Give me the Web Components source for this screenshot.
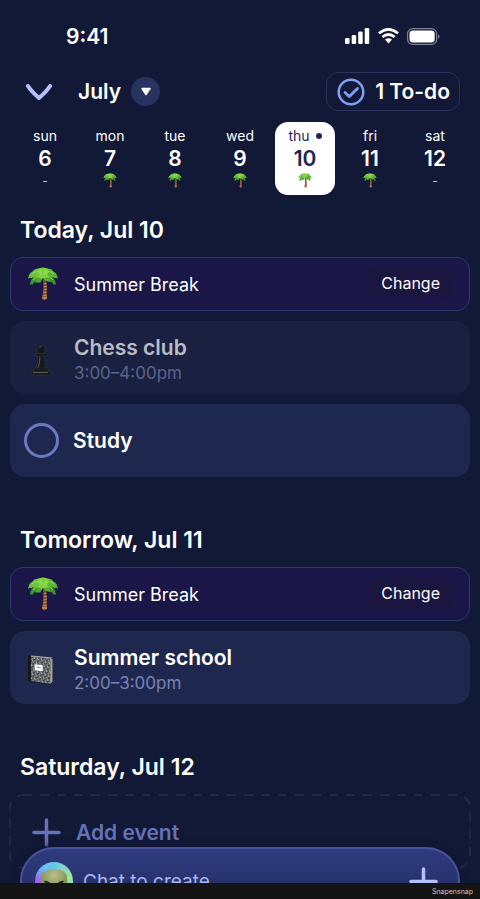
<!DOCTYPE html>
<html lang="en">
<head>
<meta charset="utf-8">
<meta name="viewport" content="width=device-width, initial-scale=1">
<title>Schedule</title>
<style>
  html, body { margin: 0; height: 100%; }
  body { background: #121937; color: #fff; font-family: Inter, "Liberation Sans", sans-serif; }
</style>
</head>
<body>
<planner-app></planner-app>
<script>
const define = (name, html, setup) => {
  const template = document.createElement('template');
  template.innerHTML = `<style>*{box-sizing:border-box}button{font:inherit;color:inherit;background:none;border:0;padding:0;cursor:pointer}svg{display:block}</style>${html}`;
  customElements.define(name, class extends HTMLElement {
    constructor() {
      super();
      this.attachShadow({ mode: 'open' }).append(template.content.cloneNode(true));
    }
    connectedCallback() { if (setup) setup(this, this.shadowRoot); }
  });
};

define('palm-icon', `
<style>:host{display:block;width:30px;height:34px}svg{width:100%;height:100%}</style>
<svg viewBox="0 0 30 34" aria-hidden="true">
  <path d="M14.500 10Q16.500 20 14 32Q16.500 33.500 19 32Q19.500 21 17.500 10Z" fill="#7d4e2d"/>
  <path d="M16 17l2.500-1M15.800 20l3-1M15.500 23l3.300-1M15 26l3.500-1M14.600 29l4-1" stroke="#c98d55" stroke-width="1.100"/>
  <path d="M14 31.500q2.500 2 5 .3l-.2-2.500q-2 1.200-4.400.6z" fill="#b98252"/>
  <path d="M12 7Q3 8 2 18Q3.500 16.500 4.500 18Q5.500 14.500 7.500 15Q8.500 12 10.500 13Q12 11 14 11Z" fill="#3f9a2c"/>
  <path d="M18 7Q27 8 28 18Q26.500 16.500 25.500 18Q24.500 14.500 22.500 15Q21.500 12 19.500 13Q18 11 16 11Z" fill="#3a8f2a"/>
  <path d="M14 4Q8-1 4 5Q1 6 0 12Q2 10 3.500 11.500Q4.500 9.500 6.500 10.500Q8 8.500 10 9.500Q12 8 14.500 8.500Z" fill="#6ac23b"/>
  <path d="M16 4Q22-1 26 5Q29 6 30 12Q28 10 26.500 11.500Q25.500 9.500 23.500 10.500Q22 8.500 20 9.500Q18 8 15.500 8.500Z" fill="#5cb436"/>
  <path d="M13 7Q8 9 7.500 16.500Q9 14.500 10 16Q11 14.500 12 16Q14.500 13 15 8Z" fill="#4fa834"/>
  <path d="M17 7Q22 9 22.500 15.500Q21 14 20 15Q19 13.500 18 14.500Q15.500 12 15 8Z" fill="#58ac36"/>
  <path d="M9 2Q15-1 21 2Q20 4 19.500 9Q18 12 15.500 11Q12.500 13 11 9.500Q11 4 9 2Z" fill="#7dd242"/>
  <path d="M4 7Q8 3 13 6M26 7Q22 3 17 6M5 13Q8 9 12 9.500M25 13Q22 9 18 9.500M12 3.500L14 8M18 3.500L16 8" fill="none" stroke="#a4e55a" stroke-width=".8"/>
</svg>`);

define('pawn-icon', `
<style>:host{display:block}</style>
<svg width="22" height="32" viewBox="0 0 22 32" aria-hidden="true" fill="#151719" stroke="#36393c" stroke-width=".6">
  <path d="M8 11H14Q13.500 19 17 25H5Q8.500 19 8 11Z"/>
  <circle cx="11" cy="5.500" r="4.500"/>
  <rect x="5" y="9.500" width="12" height="2.500" rx="1"/>
  <path d="M4.500 24H17.500L19 27.500H3Z"/>
  <rect x="1" y="27" width="20" height="4" rx="1"/>
  <path d="M8.500 4Q9.500 2.500 11.500 2.500M10 13Q10 19 8 23.500M3 28.500H18" fill="none" stroke="#6a6e70" stroke-width=".8"/>
</svg>`);

define('notebook-icon', `
<style>:host{display:block}</style>
<svg width="28" height="32" viewBox="0 0 28 32" aria-hidden="true">
  <defs><pattern id="m" width="4" height="4" patternUnits="userSpaceOnUse" patternTransform="rotate(20)">
    <rect width="4" height="4" fill="#606466"/><path d="M0 1h1v1H0zM3 0h1v1H3zM2 2.500h1v1H2z" fill="#b9bcbc"/><path d="M1 2h1v1H1zM2 .5h1v1H2zM0 3h1v1H0z" fill="#303436"/>
  </pattern></defs>
  <path d="M1 1.500L26 3.500V28L23 31L1 27Z" fill="#17191b"/>
  <path d="M4 2L24 4V30L4 27Z" fill="url(#m)"/>
  <path d="M23.500 4.500L25.500 5V27.500L23.500 30Z" fill="#a5a5a0"/>
  <path d="M4 1.500L26 3.500L24 4.500L4 2.500Z" fill="#a7a9aa"/>
  <path d="M8.500 11L15 12V16.500L8.500 15.500Z" fill="#fff" stroke="#fff" stroke-width="1.500" stroke-linejoin="round"/>
  <path d="M9.500 13L14 14" stroke="#888" stroke-width="1"/>
</svg>`);

define('status-bar', `
<style>
  :host{display:flex;justify-content:space-between;align-items:center;height:72px;padding:0 39px 0 66px}
  time{font-size:21px;font-weight:600}
  .signals{display:flex;align-items:center;gap:8px}
</style>
<time>9:41</time>
<div class="signals">
  <svg width="25" height="16" viewBox="0 0 25 16" fill="#fff" aria-label="Mobile signal"><rect y="10" width="4.500" height="6" rx="1.300"/><rect x="6.700" y="7" width="4.500" height="9" rx="1.300"/><rect x="13.200" y="3.500" width="4.500" height="12.500" rx="1.300"/><rect x="19.700" width="4.500" height="16" rx="1.300"/></svg>
  <svg width="21" height="16" viewBox="0 0 21 16" fill="none" stroke="#fff" stroke-width="2.700" aria-label="Wi-Fi"><path d="M1 5.300Q10.500-2.800 20 5.300M4.400 9Q10.500 4 16.600 9"/><path d="M7 11.600Q10.500 8.900 14 11.600L10.500 15.600Z" fill="#fff" stroke="none"/></svg>
  <svg width="34" height="17" viewBox="0 0 34 17" aria-label="Battery full"><rect x=".6" y=".6" width="29" height="15.800" rx="5" fill="none" stroke="#7d8296" stroke-width="1.200"/><rect x="2.500" y="2.500" width="25.200" height="12" rx="3.400" fill="#fff"/><path d="M31 6Q34 8.500 31 11Z" fill="#7d8296"/></svg>
</div>`);

define('month-header', `
<style>
  :host{display:flex;align-items:center;padding:0 20px 0 26px}
  .back{margin-right:26px}
  .month{display:flex;align-items:center;gap:10px;font-size:21px;font-weight:600;height:36px}
  .drop{display:grid;place-items:center;width:29px;height:29px;border-radius:50%;background:#283360}
  .todo{display:flex;align-items:center;gap:10px;height:39px;margin-left:auto;padding:0 9px 0 10px;border:1px solid #28325a;border-radius:12px;font-size:21px;font-weight:600}
</style>
<button class="back" aria-label="Collapse calendar"><svg width="26" height="18" viewBox="0 0 26 18" fill="none" stroke="#b4bffb" stroke-width="4" stroke-linecap="round" stroke-linejoin="round"><path d="M2 3Q5 8 13 15Q21 8 24 3"/></svg></button>
<button class="month">July <span class="drop"><svg width="12" height="10" viewBox="0 0 12 10"><path d="M2 1.500H10L6 7.500Z" fill="#fff" stroke="#fff" stroke-width="1.500" stroke-linejoin="round"/></svg></span></button>
<button class="todo"><svg width="28" height="28" viewBox="0 0 28 28" fill="none" stroke="#7f9ff3" stroke-width="2.500" stroke-linecap="round" stroke-linejoin="round"><circle cx="14" cy="14" r="12.300"/><path d="M8 14.500L12.300 18.500L20.500 10.500" stroke-width="2.800"/></svg>1 To-do</button>`);

define('week-day', `
<style>
  :host{display:block;min-width:0}
  button{display:flex;flex-direction:column;align-items:center;width:100%;height:73px;padding-top:4px;border-radius:13px}
  :host([selected]) button{background:#fff;color:#1d2556}
  .name{display:flex;align-items:center;gap:6px;font-size:14px;line-height:20px;height:20px}
  .num{font-size:21px;font-weight:600;line-height:26px}
  .mark{display:grid;place-items:center;width:15px;height:17px;font-size:12px;color:#b9bdcc}
  palm-icon{width:14px;height:15px}
  i{width:6px;height:6px;border-radius:50%;background:#1d2556}
</style>
<button><span class="name"></span><span class="num"></span><span class="mark"></span></button>`, (el, root) => {
  root.querySelector('.name').textContent = el.getAttribute('name');
  root.querySelector('.num').textContent = el.getAttribute('num');
  root.querySelector('.mark').append(el.hasAttribute('break') ? document.createElement('palm-icon') : '-');
  if (el.hasAttribute('selected')) {
    root.querySelector('.name').append(document.createElement('i'));
    root.querySelector('button').setAttribute('aria-current', 'date');
  }
});

define('week-strip', `
<style>:host{display:grid;grid-template-columns:repeat(7,minmax(0,1fr));gap:5px;padding:11px 15px 8px 15px}</style>
<slot></slot>`);

define('day-section', `
<style>
  :host{display:block;margin-bottom:36px}
  h2{margin:0;padding:0 10px;font-size:23px;line-height:54px;font-weight:600}
  .items{display:flex;flex-direction:column;gap:10px}
</style>
<h2></h2><div class="items"><slot></slot></div>`, (el, root) => {
  root.querySelector('h2').textContent = el.getAttribute('heading');
});

define('break-card', `
<style>
  :host{display:flex;align-items:center;height:54px;padding:0 15px 0 17px;border:1px solid #2b3870;border-radius:13px;background:#1a1647;font-size:18px}
  span{flex:1;margin-left:16px}
  button{height:30px;padding:0 14px;border-radius:10px;background:#1a163f;font-size:16px;margin-bottom:3px}
</style>
<palm-icon></palm-icon><span>Summer Break</span><button>Change</button>`);

define('event-card', `
<style>
  :host{display:flex;align-items:center;height:73px;padding-top:4px;border-radius:15px;background:#1e284e}
  :host([past]){background:#192040}
  .icon{display:grid;place-items:center;width:64px;padding-right:2px}
  .title{font-size:21px;font-weight:600;line-height:26px}
  .time{font-size:17px;line-height:24px;color:#7783b8}
  :host([past]) .title{color:#b9bcc5}
  :host([past]) .time{color:#59648d}
</style>
<div class="icon"><slot name="icon"></slot></div>
<div><div class="title"></div><div class="time"></div></div>`, (el, root) => {
  root.querySelector('.title').textContent = el.getAttribute('title-text');
  root.querySelector('.time').textContent = el.getAttribute('time');
});

define('task-card', `
<style>
  :host{display:block;border-radius:15px;background:#1e284e}
  label{display:flex;align-items:center;gap:14px;height:73px;padding-left:14px;font-size:21px;font-weight:600}
  input{appearance:none;width:35px;height:35px;margin:0;border:3px solid #6d7ac3;border-radius:50%}
  input:checked{background:#6d7ac3}
</style>
<label><input type="checkbox"><slot></slot></label>`);

define('add-event', `
<style>
  :host{display:block;position:relative}
  button{display:flex;align-items:center;gap:15px;width:100%;height:76px;padding-left:22px;color:#6571b9;font-size:21px;font-weight:600}
  .outline{position:absolute;inset:0;width:100%;height:100%;pointer-events:none;overflow:visible}
</style>
<svg class="outline" aria-hidden="true"><rect x="0" y="1" width="100%" height="73" rx="13" fill="none" stroke="#20294d" stroke-width="2" stroke-dasharray="9 8"/></svg>
<button><svg width="29" height="29" viewBox="0 0 29 29" stroke="#6571b9" stroke-width="3.500" stroke-linecap="round"><path d="M14.500 2V27M2 14.500H27"/></svg>Add event</button>`);

define('chat-bar', `
<style>
  :host{display:flex;align-items:center;gap:10px;height:68px;padding:0 20px 0 13px;border:2px solid #46539a;border-radius:38px;background:linear-gradient(#303c81,#263069 60%);box-shadow:0 0 8px #0d1331}
  input{flex:1;min-width:0;border:0;outline:0;padding:0;background:none;color:#fff;font:19px Inter,"Liberation Sans",sans-serif}
  input::placeholder{color:#a9b5f2;opacity:1}
  .face{display:grid;place-items:center;width:38px;height:38px;border-radius:50%;background:conic-gradient(#65c8e8,#a5e49a 80deg,#62c9ee 140deg,#5b72e8 210deg,#a55fe8 270deg,#68bdf0 320deg,#65c8e8)}
</style>
<div class="face"><svg width="38" height="38" viewBox="0 0 38 38" aria-hidden="true"><defs><radialGradient id="g" cy=".25"><stop stop-color="#bdc18c"/><stop offset="1" stop-color="#85945c"/></radialGradient></defs><path d="M6 17Q5 8 19 7Q33 8 32 17Q34 31 19 32Q4 31 6 17Z" fill="url(#g)"/><path d="M9 19Q13 18 16 22Q11 24 9 19ZM29 19Q25 18 22 22Q27 24 29 19Z" fill="#252b2b"/></svg></div>
<input type="text" placeholder="Chat to create" aria-label="Chat to create">
<button aria-label="Add"><svg width="29" height="29" viewBox="0 0 29 29" stroke="#b4bffb" stroke-width="3.500" stroke-linecap="round"><path d="M14.500 2V27M2 14.500H27"/></svg></button>`);

define('planner-app', `
<style>
  :host{display:flex;flex-direction:column;height:100vh}
  .screen{position:relative;flex:1;min-height:0;overflow:hidden}
  main{padding:0 10px}
  chat-bar{position:absolute;left:20px;right:20px;bottom:-32px}
  footer{height:16px;padding-right:7px;background:#141414;color:#c9c9c9;font-size:7px;line-height:18px;text-align:right}
</style>
<div class="screen">
  <status-bar></status-bar>
  <month-header></month-header>
  <week-strip>
    <week-day name="sun" num="6"></week-day>
    <week-day name="mon" num="7" break></week-day>
    <week-day name="tue" num="8" break></week-day>
    <week-day name="wed" num="9" break></week-day>
    <week-day name="thu" num="10" break selected></week-day>
    <week-day name="fri" num="11" break></week-day>
    <week-day name="sat" num="12"></week-day>
  </week-strip>
  <main>
    <day-section heading="Today, Jul 10">
      <break-card></break-card>
      <event-card past title-text="Chess club" time="3:00–4:00pm"><pawn-icon slot="icon"></pawn-icon></event-card>
      <task-card>Study</task-card>
    </day-section>
    <day-section heading="Tomorrow, Jul 11">
      <break-card></break-card>
      <event-card title-text="Summer school" time="2:00–3:00pm"><notebook-icon slot="icon"></notebook-icon></event-card>
    </day-section>
    <day-section heading="Saturday, Jul 12">
      <add-event></add-event>
    </day-section>
  </main>
  <chat-bar></chat-bar>
</div>
<footer>Snapensnap</footer>`);
</script>
</body>
</html>
